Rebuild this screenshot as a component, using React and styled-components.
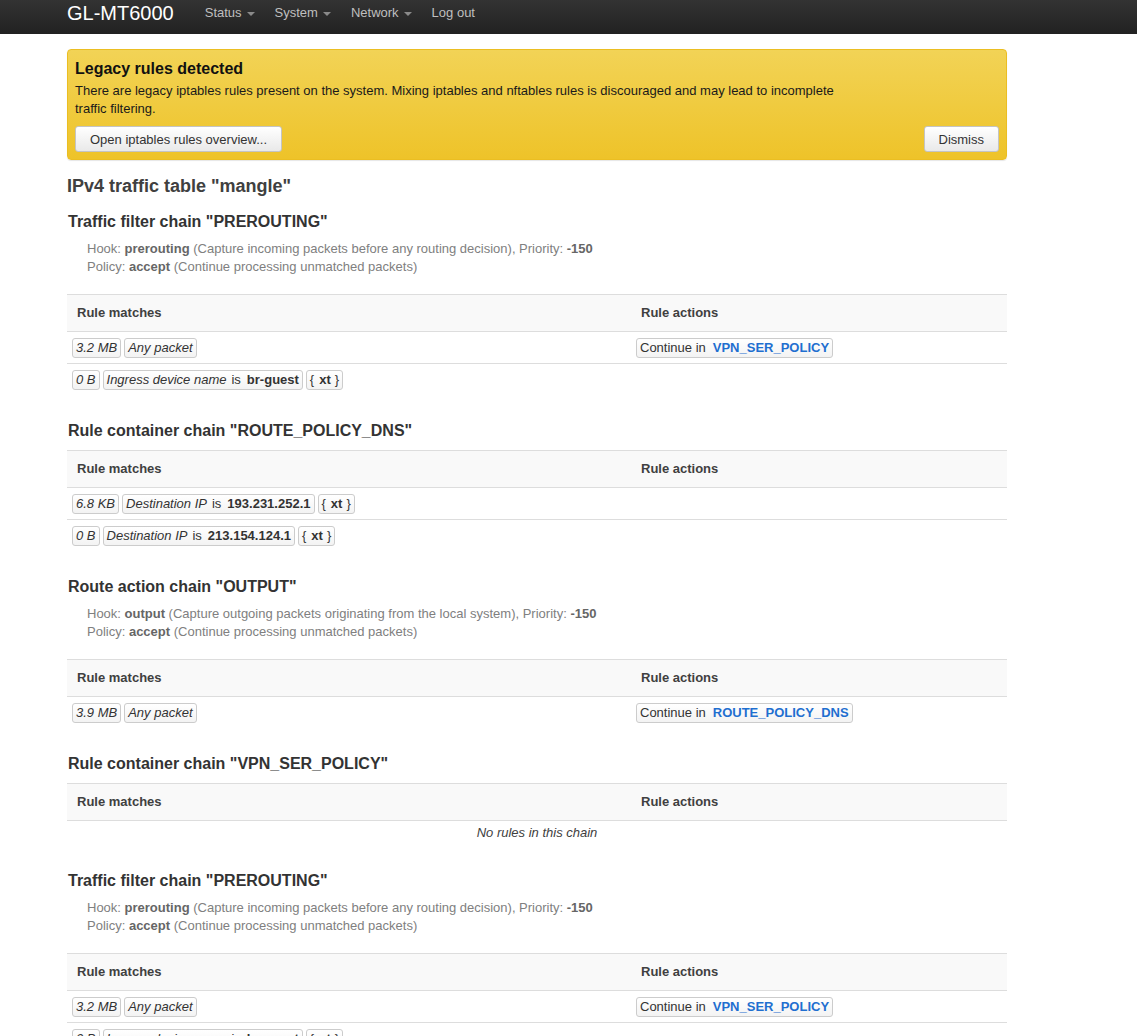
import React from "react";
import styled, { createGlobalStyle } from "styled-components";

const GlobalStyle = createGlobalStyle`
  html, body {
    margin: 0;
    padding: 0;
    background: #fff;
  }
  body {
    font-family: "Liberation Sans", Arial, sans-serif;
    font-size: 13px;
    line-height: 18px;
    color: #404040;
  }
`;

// chains shown on the page
const chains = [
  {
    type: "Traffic filter chain",
    name: "PREROUTING",
    hook: ["prerouting", "Capture incoming packets before any routing decision"],
    rules: [
      { bytes: "3.2 MB", match: [{ any: true }], action: "VPN_SER_POLICY" },
      {
        bytes: "0 B",
        match: [{ label: "Ingress device name", value: "br-guest" }, { xt: true }],
      },
    ],
  },
  {
    type: "Rule container chain",
    name: "ROUTE_POLICY_DNS",
    rules: [
      {
        bytes: "6.8 KB",
        match: [{ label: "Destination IP", value: "193.231.252.1" }, { xt: true }],
      },
      {
        bytes: "0 B",
        match: [{ label: "Destination IP", value: "213.154.124.1" }, { xt: true }],
      },
    ],
  },
  {
    type: "Route action chain",
    name: "OUTPUT",
    hook: ["output", "Capture outgoing packets originating from the local system"],
    rules: [{ bytes: "3.9 MB", match: [{ any: true }], action: "ROUTE_POLICY_DNS" }],
  },
  {
    type: "Rule container chain",
    name: "VPN_SER_POLICY",
    rules: [],
  },
  {
    type: "Traffic filter chain",
    name: "PREROUTING",
    hook: ["prerouting", "Capture incoming packets before any routing decision"],
    rules: [
      { bytes: "3.2 MB", match: [{ any: true }], action: "VPN_SER_POLICY" },
      {
        bytes: "0 B",
        match: [{ label: "Ingress device name", value: "br-guest" }, { xt: true }],
      },
    ],
  },
];

const App = () => {
  return (
    <>
      <GlobalStyle />
      <Topbar>
        <Brand>GL-MT6000</Brand>
        <Menu>
          <MenuItem>
            Status <Caret />
          </MenuItem>
          <MenuItem>
            System <Caret />
          </MenuItem>
          <MenuItem>
            Network <Caret />
          </MenuItem>
          <MenuItem>Log out</MenuItem>
        </Menu>
      </Topbar>

      <Main>
        <Alert>
          <AlertTitle>Legacy rules detected</AlertTitle>
          <AlertText>
            There are legacy iptables rules present on the system. Mixing iptables and
            nftables rules is discouraged and may lead to incomplete traffic filtering.
          </AlertText>
          <AlertButtons>
            <Button>Open iptables rules overview...</Button>
            <Button>Dismiss</Button>
          </AlertButtons>
        </Alert>

        <TableTitle>IPv4 traffic table "mangle"</TableTitle>

        <Chains>
          {chains.map((chain, i) => (
            <Chain key={i}>
              <ChainTitle>
                {chain.type} "{chain.name}"
              </ChainTitle>
              {chain.hook && (
                <Descr>
                  <div>
                    Hook: <b>{chain.hook[0]}</b> ({chain.hook[1]}), Priority: <b>-150</b>
                  </div>
                  <div>
                    Policy: <b>accept</b> (Continue processing unmatched packets)
                  </div>
                </Descr>
              )}
              <RuleTable>
                <HeadRow>
                  <HeadCell>Rule matches</HeadCell>
                  <HeadCell>Rule actions</HeadCell>
                </HeadRow>
                {chain.rules.length === 0 && <EmptyRow>No rules in this chain</EmptyRow>}
                {chain.rules.map((rule, j) => (
                  <Row key={j}>
                    <Cell>
                      <Badge $italic>{rule.bytes}</Badge>
                      {rule.match.map((m, k) =>
                        m.any ? (
                          <Badge key={k} $italic>
                            Any packet
                          </Badge>
                        ) : m.xt ? (
                          <Badge key={k}>
                            {"{"}
                            <Value>xt</Value>
                            {"}"}
                          </Badge>
                        ) : (
                          <Badge key={k}>
                            <i>{m.label}</i>
                            <Op>is</Op>
                            <b>{m.value}</b>
                          </Badge>
                        )
                      )}
                    </Cell>
                    <Cell>
                      {rule.action && (
                        <Badge>
                          {"Continue in"}
                          <Target>{rule.action}</Target>
                        </Badge>
                      )}
                    </Cell>
                  </Row>
                ))}
              </RuleTable>
            </Chain>
          ))}
        </Chains>
      </Main>
    </>
  );
};

const Topbar = styled.header`
  height: 34px;
  background: linear-gradient(#333333, #222222);
  display: flex;
  align-items: flex-start;
  padding-left: 67px;
`;

const Brand = styled.div`
  color: #fff;
  font-size: 20px;
  line-height: 26px;
  margin-right: 21px;
`;

const Menu = styled.nav`
  display: flex;
`;

const MenuItem = styled.span`
  display: flex;
  align-items: center;
  gap: 5px;
  padding: 0 10px;
  color: #bfbfbf;
  font-size: 13px;
  line-height: 26px;
`;

const Caret = styled.span`
  display: inline-block;
  width: 0;
  height: 0;
  border-top: 4px solid #8a8a8a;
  border-left: 4px solid transparent;
  border-right: 4px solid transparent;
  margin-top: 1px;
`;

const Main = styled.main`
  width: 940px;
  margin-left: 67px;
  padding: 15px 0 40px;
`;

const Alert = styled.div`
  background: linear-gradient(#f2d356, #eec329);
  border: 1px solid #ebbe22;
  border-radius: 4px;
  box-shadow: 0 1px 1px rgba(0, 0, 0, 0.1);
  padding: 9px 7px 7px;
  color: #1a1a1a;
`;

const AlertTitle = styled.div`
  font-size: 16px;
  font-weight: bold;
  line-height: 20px;
  color: #111;
`;

const AlertText = styled.p`
  margin: 3px 0 8px;
  max-width: 790px;
`;

const AlertButtons = styled.div`
  display: flex;
  justify-content: space-between;
`;

const Button = styled.button`
  height: 26px;
  padding: 0 14px;
  font-family: inherit;
  font-size: 13px;
  color: #333;
  background: linear-gradient(#ffffff, #e9e9e9);
  border: 1px solid #c4c4c4;
  border-radius: 3px;
  box-shadow: inset 0 1px 0 rgba(255, 255, 255, 0.2);
`;

const TableTitle = styled.h2`
  margin: 14px 0 14px;
  font-size: 18px;
  line-height: 24px;
  font-weight: bold;
  color: #404040;
`;

const Chains = styled.div`
  display: flex;
  flex-direction: column;
  gap: 26px;
`;

const Chain = styled.section``;

const ChainTitle = styled.h3`
  margin: 0 0 9px 1px;
  font-size: 16px;
  line-height: 20px;
  font-weight: bold;
  color: #333;
`;

const Descr = styled.div`
  padding-left: 20px;
  margin: -1px 0 18px;
  color: #808080;
  b {
    color: #666;
  }
`;

const RuleTable = styled.div`
  border-top: 1px solid #dddddd;
`;

const HeadRow = styled.div`
  display: grid;
  grid-template-columns: 564px 1fr;
  background: #f9f9f9;
`;

const HeadCell = styled.div`
  padding: 9px 10px;
  font-weight: bold;
  color: #404040;
`;

const Row = styled.div`
  display: grid;
  grid-template-columns: 564px 1fr;
  border-top: 1px solid #dddddd;
`;

const Cell = styled.div`
  display: flex;
  flex-wrap: wrap;
  gap: 3px;
  padding: 6px 5px 5px;
  min-height: 20px;
`;

const EmptyRow = styled.div`
  border-top: 1px solid #dddddd;
  padding: 3px 10px 3px;
  text-align: center;
  font-style: italic;
  color: #404040;
`;

const Badge = styled.span`
  display: inline-block;
  height: 18px;
  line-height: 18px;
  padding: 0 3px;
  border: 1px solid #cccccc;
  border-radius: 3px;
  background: linear-gradient(#ffffff, #f3f3f3);
  font-style: ${(p) => (p.$italic ? "italic" : "normal")};
  color: #333;
  white-space: nowrap;
  b {
    color: #333;
  }
`;

const Op = styled.span`
  margin: 0 6px 0 5px;
`;

const Value = styled.b`
  margin: 0 4px 0 5px;
`;

const Target = styled.span`
  color: #1f6fd0;
  font-weight: bold;
  margin-left: 7px;
`;

export default App;
